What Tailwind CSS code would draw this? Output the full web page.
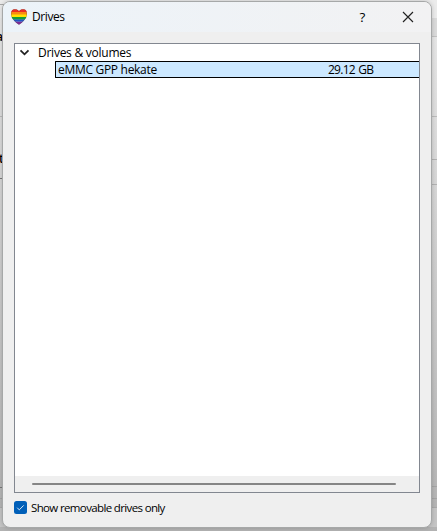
<!DOCTYPE html>
<html lang="en">
<head>
<meta charset="utf-8">
<title>Drives</title>
<script src="https://cdn.jsdelivr.net/npm/@tailwindcss/browser@4"></script>
</head>
<body class="relative h-[531px] w-[437px] overflow-hidden bg-linear-to-b from-[#e9e9e9] via-[#c8c8c8] via-60% to-[#b2b2b2] font-['Open_Sans','Noto_Sans',sans-serif] text-[12px] text-black">
  <!-- Window behind the dialog -->
  <div class="absolute inset-0 font-semibold">
    <div class="absolute left-0 top-0 h-[18px] w-full bg-[#ebebeb]"></div>
    <div class="absolute right-0 top-[18px] h-[18px] w-[6px] bg-[#dadada]"></div>
    <div class="absolute left-0 top-[4px] h-px w-[4px] bg-[#aaa]"></div>
    <div class="absolute left-[2px] top-[8px] h-[3px] w-px bg-[#cf8a66]"></div>
    <div class="absolute left-[-4px] top-[29px] leading-[16px]">a</div>
    <div class="absolute left-[-1px] top-[151px] leading-[16px]">t</div>
    <div class="absolute left-0 top-[178px] h-px w-[4px] bg-[#777]"></div>
    <div class="absolute left-0 top-[487px] h-px w-[4px] bg-[#777]"></div>
    <div class="absolute right-0 top-[36px] h-px w-[6px] bg-[#c2c2c2]"></div>
    <div class="absolute left-0 top-[116px] h-px w-full bg-[#bbb]"></div>
    <div class="absolute right-0 top-[159px] h-px w-[6px] bg-[#b2b2b2]"></div>
    <div class="absolute right-0 top-[184px] h-px w-[6px] bg-[#b2b2b2]"></div>
    <div class="absolute right-0 top-[486px] h-px w-[6px] bg-[#a5a5a5]"></div>
    <div class="absolute left-0 top-[498px] h-px w-full bg-[#a5a5a5]"></div>
    <div class="absolute left-0 top-[507px] h-[20px] w-full border-t border-[#a9a9a9] bg-[#c4c4c4]"></div>
  </div>

  <main class="absolute left-[2px] top-px flex h-[527px] w-[430px] flex-col overflow-hidden rounded-[8px] border border-[#a6a8a8] bg-[#efefef] shadow-[0_0_4px_rgba(0,0,0,0.18)]">
    <header class="flex h-[30px] shrink-0 items-center bg-linear-to-r from-[#ecf3f9] to-[#f2f2f3] pl-[8px]">
      <svg class="h-[16px] w-[16px] shrink-0" viewBox="0 0 16 16">
        <defs><clipPath id="heart"><path d="M8 2.2C6.7.2 4.6-.1 3 .3 1 .8 0 2.5 0 4.7c0 4.9 4.3 8.4 8 11.1 3.700-2.700 8-6.200 8-11.100C16 2.500 15 .8 13 .3 11.400-.1 9.300.2 8 2.200Z"/></clipPath></defs>
        <g clip-path="url(#heart)">
          <path fill="#ec2d23" d="M0 0h16v3H0z"/><path fill="#f88c12" d="M0 3h16v3H0z"/><path fill="#ffe000" d="M0 5.500h16v2.500H0z"/><path fill="#139c3b" d="M0 8h16v2.700H0z"/><path fill="#2155c4" d="M0 10.500h16v2.200H0z"/><path fill="#7b2b95" d="M0 12.700h16V16H0z"/>
          <path fill="none" stroke="#5c3b30" stroke-opacity=".45" stroke-width="1" d="M8 2.200C6.700.2 4.600-.1 3 .3 1 .8 0 2.500 0 4.700c0 4.900 4.300 8.400 8 11.100 3.700-2.700 8-6.200 8-11.100C16 2.500 15 .8 13 .3 11.400-.1 9.300.2 8 2.200Z"/>
        </g>
      </svg>
      <h1 class="ml-[5px] grow leading-[16px] tracking-[-0.4px]">Drives</h1>
      <span class="mr-[36px] w-[7px] text-center text-[13.5px] leading-[16px]">?</span>
      <svg class="mr-[17px] h-[12px] w-[12px]" viewBox="0 0 12 12" fill="none" stroke="#222" stroke-width="1.150"><path d="m1 1 10 10M11 1 1 11"/></svg>
    </header>

    <section class="ml-[11px] mt-[11px] flex h-[450px] w-[406px] shrink-0 flex-col border border-[#828790] bg-white">
      <div class="flex h-[17px] items-center pl-[4px]">
        <svg class="h-[10px] w-[12px]" viewBox="0 0 12 10" fill="none" stroke="#222" stroke-width="1.800"><path d="m1.500 2.300 4 4 4-4"/></svg>
        <span class="ml-[7px] whitespace-nowrap leading-[17px] tracking-[-0.25px]">Drives &amp; volumes</span>
      </div>
      <div class="ml-[40px] flex h-[17px] items-center rounded-l-[1px] border-y border-l border-black bg-[#cce8ff] pl-[2px]">
        <span class="w-[270px] whitespace-nowrap leading-[15px] tracking-[-0.3px]">eMMC GPP hekate</span>
        <span class="whitespace-nowrap leading-[15px] tracking-[-0.75px] [word-spacing:1px]">29.12 GB</span>
      </div>
      <div class="grow"></div>
      <div class="h-[16px] bg-[#efefef] pl-[17px] pt-[7px]">
        <div class="h-[2px] w-[364px] rounded-full bg-[#858585]"></div>
      </div>
    </section>

    <label class="ml-[11px] mt-[6px] flex h-[17px] items-center">
      <svg class="-mt-px h-[13px] w-[13px]" viewBox="0 0 13 13" fill="none"><rect width="13" height="13" rx="2.500" fill="#005fb8"/><path d="m3.200 6.700 2.100 2.100 4.400-4.400" stroke="#dceaf7" stroke-width="1"/></svg>
      <span class="ml-[4px] whitespace-nowrap text-[11.500px] leading-[16px] tracking-[-0.64px]">Show removable drives only</span>
    </label>
  </main>
</body>
</html>
